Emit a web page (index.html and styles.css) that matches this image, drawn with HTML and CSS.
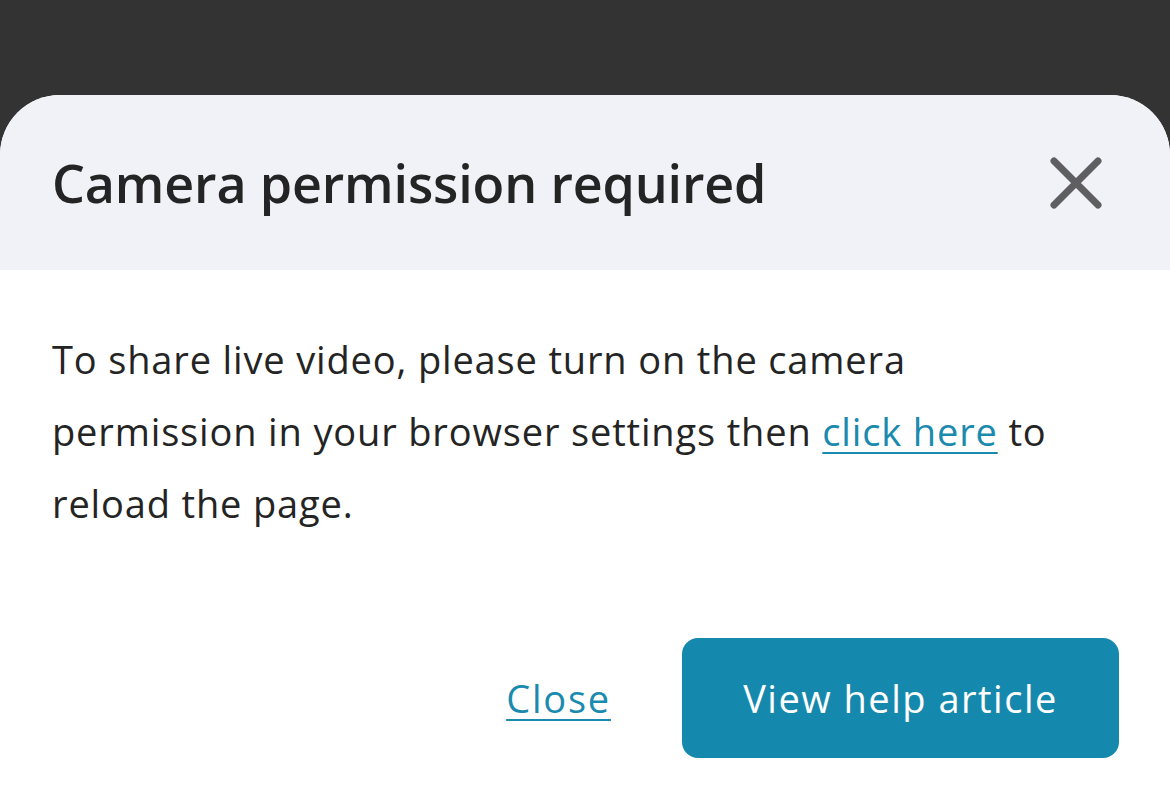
FILE: index.html
```html
<!DOCTYPE html>
<html lang="en">
<head>
<meta charset="utf-8">
<title>Camera permission required</title>
<link rel="stylesheet" href="styles.css">
</head>
<body>
<div class="backdrop"></div>
<section class="sheet">
  <header class="sheet-header">
    <h1 class="sheet-title">Camera permission required</h1>
    <button class="icon-close" aria-label="Close">
      <svg width="52" height="52" viewBox="0 0 52 52"><path d="M4 4 L48 48 M48 4 L4 48" stroke="#5f5f62" stroke-width="7" stroke-linecap="round" fill="none"/></svg>
    </button>
  </header>
  <div class="sheet-body">
    <p class="message">To share live video, please turn on the camera<br>permission in your browser settings then <a href="#" class="link">click here</a> to<br>reload the page.</p>
    <div class="actions">
      <a href="#" class="link close-link">Close</a>
      <button class="primary">View help article</button>
    </div>
  </div>
</section>
</body>
</html>
```
FILE: styles.css
```css
html, body {
  margin: 0;
  padding: 0;
  height: 100%;
  background: #333333;
  overflow: hidden;
}
body {
  font-family: "Open Sans", "Noto Sans", sans-serif;
  color: #242424;
  display: flex;
  flex-direction: column;
}
.backdrop {
  height: 95px;
  flex: none;
}
.sheet {
  flex: 1;
  background: #ffffff;
  border-radius: 60px 60px 0 0;
  overflow: hidden;
  display: flex;
  flex-direction: column;
}
.sheet-header {
  height: 175px;
  background: #f1f2f7;
  display: flex;
  align-items: center;
  justify-content: space-between;
  padding: 0 68px 0 52px;
  box-sizing: border-box;
}
.sheet-title {
  margin: 0;
  font-size: 52px;
  font-weight: 600;
  color: #242424;
  letter-spacing: -0.15px;
}
.icon-close {
  background: none;
  border: 0;
  padding: 0;
  width: 52px;
  height: 52px;
  display: flex;
}
.sheet-body {
  padding: 53px 51px 0 52px;
}
.message {
  margin: 0;
  font-size: 38px;
  line-height: 72px;
  letter-spacing: 0.85px;
  color: #242424;
}
.link {
  color: #1a8aae;
  text-decoration: underline;
  text-decoration-thickness: 2px;
  text-underline-offset: 6px;
}
.actions {
  margin-top: 99px;
  display: flex;
  justify-content: flex-end;
  align-items: center;
  gap: 71px;
}
.close-link {
  font-size: 38px;
  letter-spacing: 1.8px;
}
.primary {
  width: 437px;
  height: 120px;
  background: #1589ad;
  color: #ffffff;
  border: 0;
  border-radius: 16px;
  font-family: inherit;
  font-size: 38px;
  letter-spacing: 1.5px;
}
```
